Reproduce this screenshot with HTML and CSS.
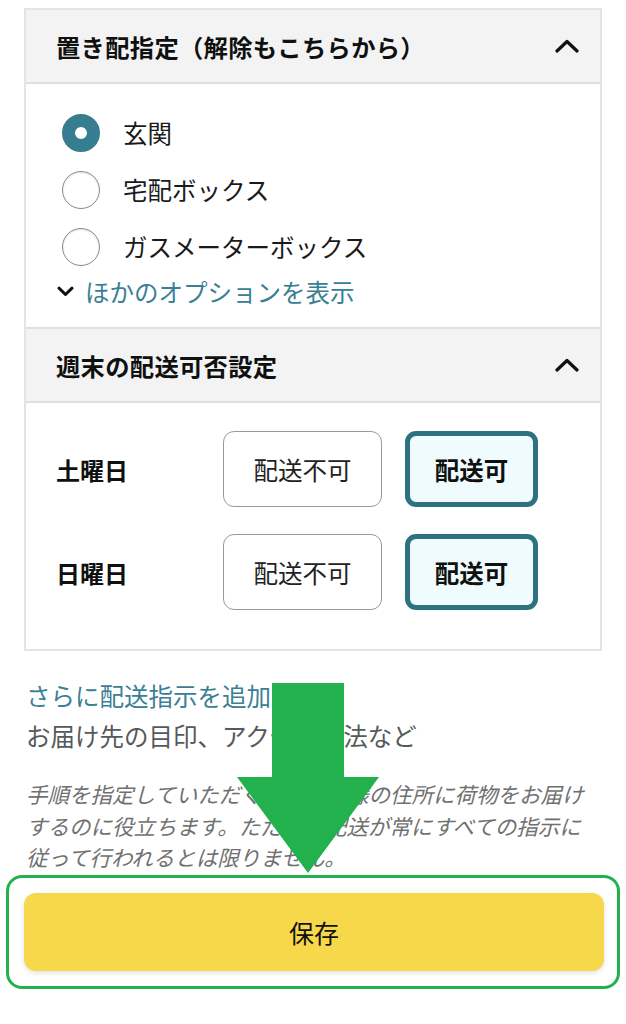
FILE: index.html
```html
<!DOCTYPE html>
<html lang="ja">
<head>
<meta charset="utf-8">
<title>置き配指定</title>
<link rel="stylesheet" href="styles.css">
</head>
<body>
<div class="page">
  <div class="card">
    <div class="sec-head">
      <span class="sec-title">置き配指定（解除もこちらから）</span>
      <svg class="chev-up" width="24" height="14" viewBox="0 0 24 14"><path d="M2 12 L12 2.5 L22 12" fill="none" stroke="#111" stroke-width="3.2" stroke-linecap="round" stroke-linejoin="round"/></svg>
    </div>
    <div class="radios">
      <div class="radio-row"><span class="radio checked"></span><span class="radio-label">玄関</span></div>
      <div class="radio-row"><span class="radio"></span><span class="radio-label">宅配ボックス</span></div>
      <div class="radio-row"><span class="radio"></span><span class="radio-label">ガスメーターボックス</span></div>
      <div class="more-row">
        <svg class="chev-down" width="17" height="11" viewBox="0 0 17 11"><path d="M2 2.2 L8.5 8.5 L15 2.2" fill="none" stroke="#111" stroke-width="3" stroke-linecap="round" stroke-linejoin="round"/></svg>
        <span class="link">ほかのオプションを表示</span>
      </div>
    </div>
    <div class="sec-head">
      <span class="sec-title">週末の配送可否設定</span>
      <svg class="chev-up" width="24" height="14" viewBox="0 0 24 14"><path d="M2 12 L12 2.5 L22 12" fill="none" stroke="#111" stroke-width="3.2" stroke-linecap="round" stroke-linejoin="round"/></svg>
    </div>
    <div class="weekend">
      <div class="day-row">
        <span class="day">土曜日</span>
        <span class="opt">配送不可</span>
        <span class="opt selected">配送可</span>
      </div>
      <div class="day-row">
        <span class="day">日曜日</span>
        <span class="opt">配送不可</span>
        <span class="opt selected">配送可</span>
      </div>
    </div>
  </div>

  <div class="add-link">さらに配送指示を追加</div>
  <div class="add-sub">お届け先の目印、アクセス方法など</div>
  <p class="note">手順を指定していただくと、お客様の住所に荷物をお届けするのに役立ちます。ただし、配送が常にすべての指示に従って行われるとは限りません。</p>

  <div class="save-frame">
    <div class="save-btn">保存</div>
  </div>

  <svg class="arrow" width="626" height="1024" viewBox="0 0 626 1024"><polygon points="272,683 344,683 344,777 379,777 308,873 237,777 272,777" fill="#22b14c"/></svg>
</div>
</body>
</html>
```

FILE: styles.css
```css
html, body {
  margin: 0;
  padding: 0;
  background: #fff;
}
body {
  font-family: "Noto Sans CJK JP", "Noto Sans", sans-serif;
  color: #0f1111;
}
.page {
  position: relative;
  width: 626px;
  height: 1024px;
  box-sizing: border-box;
  padding: 8px 24px 0 24px;
  overflow: hidden;
}
.card {
  border: 2px solid #e4e4e4;
}
.sec-head {
  height: 72px;
  background: #f3f3f3;
  border-bottom: 2px solid #e0e0e0;
  display: flex;
  align-items: center;
  justify-content: space-between;
  padding: 0 21px 0 30px;
}
.sec-title {
  font-size: 24.3px;
  font-weight: 700;
  letter-spacing: 0.3px;
}
.chev-up {
  display: block;
}
.radios {
  padding: 20px 0 20px 36px;
  border-bottom: 2px solid #e0e0e0;
}
.radio-row {
  height: 57px;
  display: flex;
  align-items: center;
}
.radio {
  width: 38px;
  height: 38px;
  box-sizing: border-box;
  border-radius: 50%;
  border: 1.5px solid #8a8a8a;
  box-shadow: inset 0 1px 2px rgba(0,0,0,0.12);
  flex: none;
}
.radio.checked {
  border: 13px solid #377d90;
  box-shadow: none;
}
.radio-label {
  margin-left: 23px;
  font-size: 24.5px;
  color: #1a1a1a;
}
.more-row {
  height: 32px;
  display: flex;
  align-items: center;
  margin-left: -5px;
}
.chev-down {
  display: block;
  margin-right: 11px;
}
.link {
  font-size: 24.5px;
  color: #3a8095;
}
.weekend {
  padding: 28px 0 39px 30px;
  display: flex;
  flex-direction: column;
  gap: 27px;
}
.day-row {
  display: flex;
  align-items: center;
}
.day {
  width: 167px;
  font-size: 24px;
  font-weight: 700;
}
.opt {
  height: 76px;
  box-sizing: border-box;
  display: flex;
  align-items: center;
  justify-content: center;
  font-size: 24.5px;
  border-radius: 11px;
}
.opt:not(.selected) {
  width: 159px;
  border: 1.5px solid #9a9a9a;
  color: #222;
}
.opt.selected {
  width: 133px;
  margin-left: 23px;
  border: 5px solid #2e7282;
  background: #f0fbfe;
  font-weight: 700;
}
.add-link {
  margin-top: 25px;
  font-size: 24.5px;
  line-height: 40px;
  color: #3a8095;
  padding-left: 2px;
}
.add-sub {
  font-size: 24.5px;
  line-height: 40px;
  color: #565959;
  padding-left: 2px;
}
.note {
  margin: 22px 0 0 0;
  padding-left: 2px;
  font-size: 21.5px;
  line-height: 31.5px;
  font-style: italic;
  color: #6f7171;
}
.save-frame {
  margin: 2px -18px 0 -18px;
  border: 3px solid #23b14d;
  border-radius: 16px;
  padding: 15px 13px 15px 15px;
}
.save-btn {
  height: 78px;
  background: #f7d84a;
  border-radius: 12px;
  display: flex;
  align-items: center;
  justify-content: center;
  font-size: 25px;
  color: #111;
  box-shadow: 0 2px 5px rgba(0,0,0,0.12);
}
.arrow {
  position: absolute;
  left: 0;
  top: 0;
  pointer-events: none;
}
```
